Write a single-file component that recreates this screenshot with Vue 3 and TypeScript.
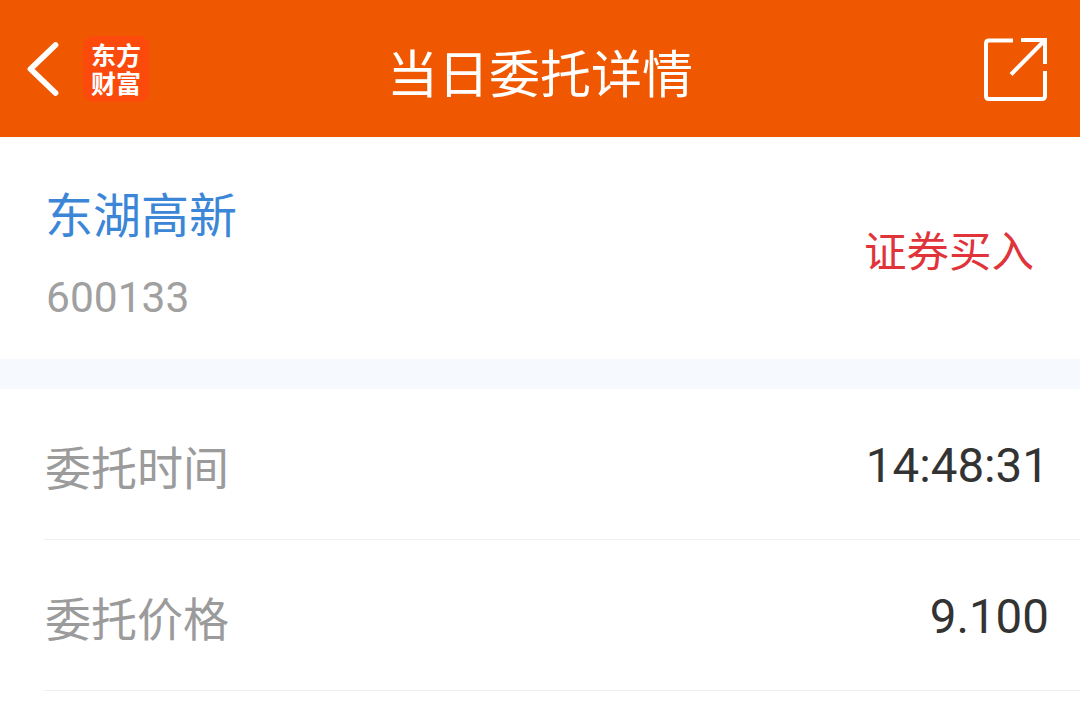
<template>
  <div class="page">
    <!-- Header -->
    <header class="topbar">
      <div class="left">
        <svg class="back" width="34" height="56" viewBox="0 0 34 56">
          <path d="M30.500 4 L5.500 28 L30.500 52" fill="none" stroke="#fff" stroke-width="5.800" stroke-linecap="round" stroke-linejoin="round" />
        </svg>
        <div class="logo">
          <span>东方</span>
          <span>财富</span>
        </div>
      </div>
      <h1 class="title">当日委托详情</h1>
      <svg class="share" width="64" height="64" viewBox="0 0 64 64">
        <path d="M29 3.500 H5 Q2 3.500 2 6.500 V59 Q2 62 5 62 H58 Q61 62 61 59 V34" fill="none" stroke="#fff" stroke-width="4" />
        <path d="M37 3 H61 V27" fill="none" stroke="#fff" stroke-width="4" />
        <path d="M60 4 L27 37.500" fill="none" stroke="#fff" stroke-width="4" />
      </svg>
    </header>

    <!-- Stock -->
    <section class="stock">
      <div>
        <div class="name">{{ stock.name }}</div>
        <div class="code">{{ stock.code }}</div>
      </div>
      <div class="side">{{ stock.side }}</div>
    </section>

    <div class="gap"></div>

    <!-- Rows -->
    <div class="row" v-for="row in rows" :key="row.label">
      <span class="label">{{ row.label }}</span>
      <span class="value">{{ row.value }}</span>
    </div>
  </div>
</template>

<script setup lang="ts">
const stock = { name: '东湖高新', code: '600133', side: '证券买入' };

const rows = [
  { label: '委托时间', value: '14:48:31' },
  { label: '委托价格', value: '9.100' },
];
</script>

<style>
html,
body {
  margin: 0;
  background: #fff;
}
</style>

<style scoped>
.page {
  width: 1080px;
  height: 715px;
  overflow: hidden;
  background: #fff;
  font-family: "Noto Sans CJK SC", "Noto Sans", sans-serif;
}

.topbar {
  height: 137px;
  background: #ef5800;
  display: flex;
  align-items: center;
  justify-content: space-between;
  padding: 0 32px 0 25px;
  position: relative;
}

.left {
  display: flex;
  align-items: center;
  gap: 24px;
}

.back {
  margin-top: 1px;
}

.logo {
  width: 66px;
  height: 66px;
  border-radius: 11px;
  background: #fb4a0c;
  color: #fff;
  display: flex;
  flex-direction: column;
  align-items: center;
  justify-content: center;
  padding-top: 2px;
  box-sizing: border-box;
  font-size: 25px;
  font-weight: 700;
  line-height: 28px;
  font-family: "Liberation Sans", "Noto Sans CJK SC", sans-serif;
}

.title {
  position: absolute;
  left: 0;
  right: 0;
  margin: 0;
  padding-top: 5px;
  text-align: center;
  color: #fff;
  font-size: 51px;
  font-weight: 400;
  line-height: 74px;
}

.stock {
  height: 222px;
  box-sizing: border-box;
  display: flex;
  align-items: center;
  justify-content: space-between;
  padding: 0 46px 0 45px;
}

.name {
  color: #3c86d8;
  font-size: 48px;
  line-height: 60px;
  margin-top: 8px;
}

.code {
  color: #a0a0a0;
  font-family: Roboto, sans-serif;
  font-size: 42.500px;
  line-height: 48px;
  margin: 32px 0 0 1px;
}

.side {
  color: #e0343a;
  font-size: 42.500px;
  line-height: 56px;
  margin-top: 1px;
}

.gap {
  height: 30px;
  background: #f6f9fe;
}

.row {
  height: 151px;
  box-sizing: border-box;
  margin-left: 44px;
  padding-right: 32px;
  border-bottom: 1px solid #efefef;
  display: flex;
  align-items: center;
  justify-content: space-between;
}

.label {
  color: #9b9b9b;
  font-size: 46px;
  line-height: 60px;
  margin: 2px 0 0 1px;
}

.value {
  color: #333;
  font-family: Roboto, sans-serif;
  font-size: 47.500px;
  line-height: 60px;
  margin: 3px -1px 0 0;
}
</style>
